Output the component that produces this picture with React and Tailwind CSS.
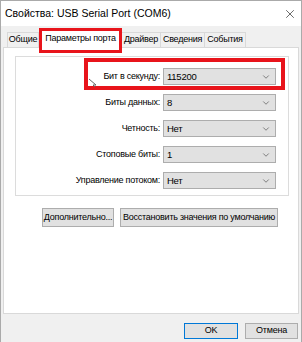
import { ChevronDown, X } from "lucide-react";

const tabs = [
    { id: "general", label: "Общие", w: "w-[32px]" },
    { id: "port", label: "Параметры порта", w: "w-[83px]" },
    { id: "driver", label: "Драйвер", w: "w-[40px]" },
    { id: "details", label: "Сведения", w: "w-[45px]" },
    { id: "events", label: "События", w: "w-[42px]" },
];

const settings = [
    { label: "Бит в секунду:", value: "115200" },
    { label: "Биты данных:", value: "8" },
    { label: "Четность:", value: "Нет" },
    { label: "Стоповые биты:", value: "1" },
    { label: "Управление потоком:", value: "Нет" },
];

const Select = ({ value }) => (
    <div className="w-[113px] h-[17px] bg-[#e1e1e1] border border-[#adadad] flex items-center justify-between pl-[3px] pr-[4px]">
        <span className="leading-none text-[9.5px]">{value}</span>
        <ChevronDown size={10} strokeWidth={1.5} className="text-[#444]" />
    </div>
);

const App = () => {
    const activeTab = "port";

    return (
        <div
            className="relative w-[302px] h-[342px] bg-[#f0f0f0] border-t border-x border-[#aaaaaa] text-[9px] tracking-[-0.25px] whitespace-nowrap text-black overflow-hidden"
            style={{ fontFamily: '"Liberation Sans", Arial, sans-serif' }}
        >
            {/* Title bar */}
            <div className="h-[25px] bg-white flex items-center justify-between pl-[4px] pr-[4px]">
                <span className="text-[10.5px] tracking-normal">Свойства: USB Serial Port (COM6)</span>
                <X size={14} strokeWidth={1} className="text-black" />
            </div>

            <div className="px-[2px]">
                {/* Tabs */}
                <div className="h-[21px] flex items-end pl-[4px] relative z-10">
                    {tabs.map((tab) =>
                        tab.id === activeTab ? (
                            <div
                                key={tab.id}
                                className={`${tab.w} h-[19px] -mb-px bg-white border border-b-0 border-[#d9d9d9] flex items-center justify-center`}
                            >
                                {tab.label}
                            </div>
                        ) : (
                            <div
                                key={tab.id}
                                className={`${tab.w} h-[15px] bg-[#f0f0f0] border border-b-0 border-[#d9d9d9] flex items-center justify-center -ml-px first:ml-0`}
                            >
                                {tab.label}
                            </div>
                        )
                    )}
                </div>

                {/* Tab panel */}
                <div className="h-[267px] bg-white border border-[#d9d9d9] pt-[8px] pl-[11px]">
                    <div className="w-[274px] h-[140px] border border-[#dcdcdc] pt-[11px] flex flex-col gap-[9px]">
                        {settings.map((s) => (
                            <div key={s.label} className="flex items-center">
                                <div className="w-[147px] text-right pr-[3px]">{s.label}</div>
                                <Select value={s.value} />
                            </div>
                        ))}
                    </div>

                    <div className="flex gap-[6px] mt-[12px] pl-[27px]">
                        <button className="w-[72px] h-[19px] bg-[#e1e1e1] border border-[#adadad] flex items-center justify-center">
                            Дополнительно...
                        </button>
                        <button className="w-[158px] h-[19px] bg-[#e1e1e1] border border-[#adadad] flex items-center justify-center">
                            Восстановить значения по умолчанию
                        </button>
                    </div>
                </div>

                {/* Dialog buttons */}
                <div className="flex justify-end gap-[7px] mt-[9px] pr-[1px]">
                    <button className="w-[54px] h-[16px] bg-[#e1e1e1] border border-[#0078d7] flex items-center justify-center">
                        OK
                    </button>
                    <button className="w-[53px] h-[16px] bg-[#e1e1e1] border border-[#adadad] flex items-center justify-center">
                        Отмена
                    </button>
                </div>
            </div>

            {/* Annotation boxes */}
            <div className="absolute left-[38px] top-[27px] w-[83px] h-[25px] border-[3px] border-[#e8141b] z-20" />
            <div className="absolute left-[83px] top-[57px] w-[201px] h-[32px] border-[4px] border-[#e8141b] z-20" />

            {/* Mouse cursor */}
            <svg className="absolute left-[87px] top-[77px] z-30" width="9" height="10" viewBox="0 0 9 10">
                <path d="M1 1 L8 7 L5 7 L7 9" fill="none" stroke="#666" strokeWidth="1" />
            </svg>
        </div>
    );
};

export default App;
